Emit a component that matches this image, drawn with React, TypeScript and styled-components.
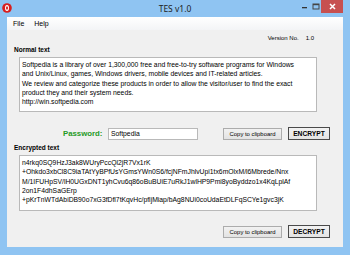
import styled, { createGlobalStyle } from 'styled-components'

const GlobalStyle = createGlobalStyle`
  html, body {
    margin: 0;
    padding: 0;
    background: #ffffff;
  }
  body {
    font-family: "Liberation Sans", Arial, sans-serif;
  }
`

const Window = styled.div`
  width: 350px;
  height: 255px;
  background: #8fc4f2;
  display: flex;
  flex-direction: column;
  box-sizing: border-box;
  padding: 0 7px 8px;
  overflow: hidden;
`

const TitleBar = styled.div`
  position: relative;
  height: 17px;
  display: flex;
  align-items: center;
  justify-content: center;
  margin: 0 -7px;
`

const AppIcon = styled.svg`
  position: absolute;
  left: 2px;
  top: 3px;
`

const Title = styled.div`
  font-family: "Noto Sans", "Liberation Sans", sans-serif;
  font-size: 8.5px;
  color: #1e1e1e;
  margin-top: -1px;
`

const Controls = styled.div`
  position: absolute;
  right: 7px;
  top: 0;
  display: flex;
  align-items: flex-start;
`

const CtrlButton = styled.div<{ $close?: boolean }>`
  width: ${p => (p.$close ? 22 : 11)}px;
  height: 13px;
  background: ${p => (p.$close ? '#c75050' : 'transparent')};
  display: flex;
  align-items: center;
  justify-content: center;
`

const MenuBar = styled.div`
  height: 14px;
  background: linear-gradient(#ffffff, #f3f4f6);
  display: flex;
  align-items: center;
  padding-left: 6px;
  gap: 10px;
  border-bottom: 1px solid #f0f0f0;
  box-sizing: border-box;
`

const MenuItem = styled.span`
  font-size: 7px;
  color: #000;
`

const Client = styled.div`
  flex: 1;
  background: #f0f0f0;
  display: flex;
  flex-direction: column;
`

const VersionRow = styled.div`
  height: 14px;
  display: flex;
  align-items: center;
  justify-content: flex-end;
  gap: 7px;
  padding-right: 29px;
  font-size: 6px;
  color: #000;
`

const GroupLabel = styled.div<{ $top: number }>`
  font-size: 6.5px;
  font-weight: bold;
  color: #000;
  height: 10px;
  line-height: 10px;
  padding-left: 7px;
  margin-top: ${p => p.$top}px;
`

const TextBox = styled.div<{ $h: number }>`
  margin: 2px 0 0 12px;
  width: 298px;
  height: ${p => p.$h}px;
  box-sizing: border-box;
  background: #ffffff;
  border: 1px solid #b9b9b9;
  padding: 2px 2px;
  font-size: 6.8px;
  line-height: 9.3px;
  color: #000;
  white-space: pre;
  overflow: hidden;
`

const ActionRow = styled.div<{ $top: number }>`
  display: flex;
  align-items: center;
  height: 13px;
  margin-top: ${p => p.$top}px;
`

const PasswordLabel = styled.span`
  margin-left: 56px;
  width: 45px;
  font-size: 7.8px;
  font-weight: bold;
  color: #259a25;
`

const PasswordInput = styled.div`
  width: 90px;
  height: 12px;
  box-sizing: border-box;
  background: #fff;
  border: 1px solid #b9b9b9;
  font-size: 6.8px;
  line-height: 10px;
  padding-left: 2px;
  color: #000;
`

const Button = styled.div<{ $w: number; $left: number; $primary?: boolean }>`
  width: ${p => p.$w}px;
  height: ${p => (p.$primary ? 13 : 12)}px;
  margin-left: ${p => p.$left}px;
  box-sizing: border-box;
  border: 1px solid ${p => (p.$primary ? '#4a4a4a' : '#acacac')};
  background: linear-gradient(#f2f2f2, #e3e3e3);
  display: flex;
  align-items: center;
  justify-content: center;
  font-size: ${p => (p.$primary ? 6.7 : 5.9)}px;
  font-weight: ${p => (p.$primary ? 'bold' : 'normal')};
  color: #000;
`

const normalText = [
  'Softpedia is a library of over 1,300,000 free and free-to-try software programs for Windows',
  'and Unix/Linux, games, Windows drivers, mobile devices and IT-related articles.',
  'We review and categorize these products in order to allow the visitor/user to find the exact',
  'product they and their system needs.',
  'http://win.softpedia.com',
].join('\n')

const encryptedText = [
  'n4rkq0SQ9HzJ3ak8WUryPccQl2jR7Vx1rK',
  '+Ohkdo3xbCl8C9iaTAtYyBPfUsYGmsYWn0S6/fcjNFmJhlvUpi1tx6mOlxM/l6Mbrede/Nnx',
  'M/1IFUHpSV/lH0UGxDNT1yhCvu6q86oBuBUiE7uRkJ1wlHP9Pmi8yoByddzo1x4KqLplAf',
  '2on1F4dhSaGErp',
  '+pKrTnWTdAbiDB90o7xG3fDfl7tKqvHc/pfljMiap/bAg8NUi0coUdaEtDLFqSCYe1gvc3jK',
].join('\n')

export default function App() {
  return (
    <>
      <GlobalStyle />
      <Window>
        <TitleBar>
          <AppIcon width="10" height="10" viewBox="0 0 10 10">
            <ellipse cx="5" cy="5" rx="4.8" ry="4.8" fill="#d81e1e" />
            <ellipse cx="5" cy="5" rx="2" ry="3" fill="#ffffff" />
            <ellipse cx="5" cy="5" rx="1" ry="1.8" fill="#d81e1e" />
          </AppIcon>
          <Title>TES v1.0</Title>
          <Controls>
            <CtrlButton>
              <svg width="7" height="7" viewBox="0 0 7 7">
                <rect x="1" y="4" width="5" height="1.3" fill="#333" />
              </svg>
            </CtrlButton>
            <CtrlButton>
              <svg width="8" height="7" viewBox="0 0 8 7">
                <rect x="1" y="1" width="6" height="5" fill="none" stroke="#444" strokeWidth="1" />
                <rect x="1" y="1" width="6" height="1.2" fill="#444" />
              </svg>
            </CtrlButton>
            <CtrlButton $close>
              <svg width="7" height="7" viewBox="0 0 7 7">
                <path d="M1 1L6 6M6 1L1 6" stroke="#fff" strokeWidth="1.5" />
              </svg>
            </CtrlButton>
          </Controls>
        </TitleBar>
        <MenuBar>
          <MenuItem>File</MenuItem>
          <MenuItem>Help</MenuItem>
        </MenuBar>
        <Client>
          <VersionRow>
            <span>Version No.</span>
            <span>1.0</span>
          </VersionRow>
          <GroupLabel $top={0}>Normal text</GroupLabel>
          <TextBox $h={55}>{normalText}</TextBox>
          <ActionRow $top={15}>
            <PasswordLabel>Password:</PasswordLabel>
            <PasswordInput>Softpedia</PasswordInput>
            <Button $w={59} $left={25}>Copy to clipboard</Button>
            <Button $w={42} $left={6} $primary>ENCRYPT</Button>
          </ActionRow>
          <GroupLabel $top={3}>Encrypted text</GroupLabel>
          <TextBox $h={56}>{encryptedText}</TextBox>
          <ActionRow $top={14}>
            <Button $w={59} $left={216}>Copy to clipboard</Button>
            <Button $w={42} $left={6} $primary>DECRYPT</Button>
          </ActionRow>
        </Client>
      </Window>
    </>
  )
}
